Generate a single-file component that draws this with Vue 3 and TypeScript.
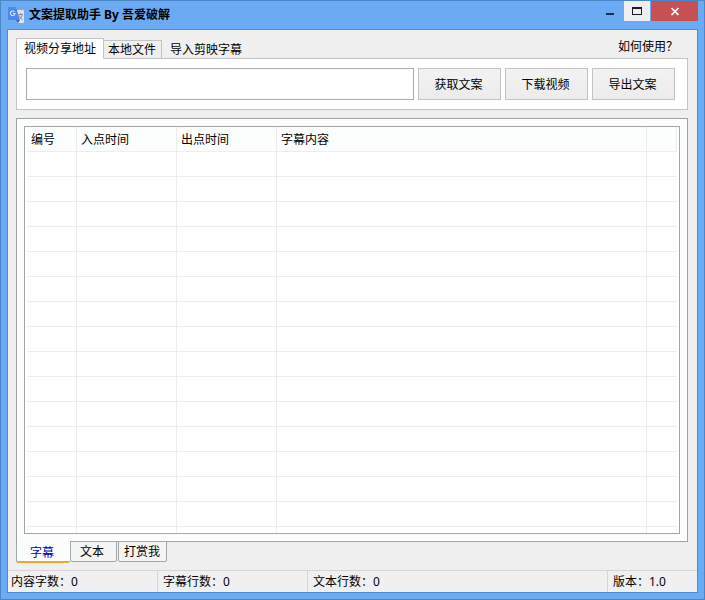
<script setup lang="ts">
import { ref } from 'vue'

interface StatusItem {
  label: string
  value: string
}

const sourceTabs: string[] = ['视频分享地址', '本地文件', '导入剪映字幕']
const viewTabs: string[] = ['字幕', '文本', '打赏我']
const actions: string[] = ['获取文案', '下载视频', '导出文案']
const columns: string[] = ['编号', '入点时间', '出点时间', '字幕内容', '']
const statusItems: StatusItem[] = [
  { label: '内容字数：', value: '0' },
  { label: '字幕行数：', value: '0' },
  { label: '文本行数：', value: '0' },
  { label: '版本：', value: '1.0' },
]
const emptyRows = 16

const activeSource = ref(0)
const activeView = ref(0)
const shareUrl = ref('')
</script>

<template>
  <div class="window">
    <header class="titlebar">
      <svg class="app-icon" viewBox="0 0 16 16" aria-hidden="true">
        <path d="M6 3h9a1 1 0 0 1 1 1v11a1 1 0 0 1-1 1h-5z" fill="#dfe3e6" />
        <path d="M1 0h7l4 13H1a1 1 0 0 1-1-1V1a1 1 0 0 1 1-1z" fill="#4f88ec" />
        <path d="M8 13h4l-2 3z" fill="#3464c0" />
        <path d="M6.500 4.800A2.300 2.300 0 1 0 7 6.500H4.900" fill="none" stroke="#d5e6ff" stroke-width="1.100" />
        <path d="M10.500 7.500h4.500M12.700 6v1.500M14.200 7.500c-.4 2.300-1.600 4-3 5M11.300 8.500c.6 1.700 1.800 3.200 3.500 4" fill="none" stroke="#84909a" stroke-width="1" />
      </svg>
      <h1 class="title">文案提取助手 By 吾爱破解</h1>
      <div class="controls">
        <button class="control minimize" type="button" aria-label="最小化">
          <svg viewBox="0 0 10 10" aria-hidden="true"><path d="M0 7h8v2H0z" fill="#17304c" /></svg>
        </button>
        <button class="control maximize" type="button" aria-label="最大化">
          <svg viewBox="0 0 10 10" aria-hidden="true"><path d="M0 1h10v8H0zM1 3v5h8V3z" fill="#1c1c1c" fill-rule="evenodd" /></svg>
        </button>
        <button class="control close" type="button" aria-label="关闭">
          <svg viewBox="0 0 10 10" aria-hidden="true"><path d="M1.500 2l7 7M8.500 2l-7 7" stroke="#fff" stroke-width="1.700" /></svg>
        </button>
      </div>
    </header>

    <main class="client">
      <section class="source">
        <div class="source-head">
          <div class="source-tabs" role="tablist">
            <button
              v-for="(tab, i) in sourceTabs"
              :key="tab"
              class="source-tab"
              :class="{ active: activeSource === i, plain: i === 2 }"
              type="button"
              role="tab"
              :aria-selected="activeSource === i"
              @click="activeSource = i"
            >{{ tab }}</button>
          </div>
          <a class="help" href="#">如何使用？</a>
        </div>
        <form class="source-panel" @submit.prevent>
          <input v-model="shareUrl" class="url" type="text" aria-label="视频分享地址" />
          <button v-for="action in actions" :key="action" class="action" type="button">{{ action }}</button>
        </form>
      </section>

      <section class="result">
        <div class="result-panel">
          <div class="grid-box">
            <table class="grid">
              <colgroup>
                <col class="col-no" />
                <col class="col-time" />
                <col class="col-time" />
                <col class="col-text" />
                <col />
              </colgroup>
              <thead>
                <tr>
                  <th v-for="(column, i) in columns" :key="i" scope="col">{{ column }}</th>
                </tr>
              </thead>
              <tbody>
                <tr v-for="row in emptyRows" :key="row">
                  <td v-for="(column, i) in columns" :key="i"></td>
                </tr>
              </tbody>
            </table>
          </div>
        </div>
        <div class="view-tabs" role="tablist">
          <button
            v-for="(tab, i) in viewTabs"
            :key="tab"
            class="view-tab"
            :class="{ active: activeView === i }"
            type="button"
            role="tab"
            :aria-selected="activeView === i"
            @click="activeView = i"
          >{{ tab }}</button>
        </div>
      </section>

      <footer class="status">
        <span v-for="item in statusItems" :key="item.label" class="status-item">{{ item.label }}{{ item.value }}</span>
      </footer>
    </main>
  </div>
</template>

<style>
body {
  margin: 0;
}
</style>

<style scoped>
.window {
  box-sizing: border-box;
  display: flex;
  flex-direction: column;
  height: 100vh;
  padding: 0 6px 6px;
  border: 1px solid #4a86c8;
  background: #6aabf4;
  color: #000;
  font: 12px/16px "Noto Sans", "Noto Sans CJK SC", sans-serif;
}

button,
input {
  box-sizing: border-box;
  margin: 0;
  border-radius: 0;
  color: inherit;
  font: inherit;
}

.titlebar {
  display: flex;
  height: 28px;
}

.app-icon {
  width: 16px;
  height: 16px;
  margin: 6px 5px 0 1px;
}

.title {
  flex: 1;
  margin: 5px 0 0;
  font-size: 12px;
  font-weight: 700;
  line-height: 18px;
}

.controls {
  display: flex;
  height: 20px;
}

.control {
  display: flex;
  align-items: center;
  justify-content: center;
  width: 27px;
  padding: 0;
  border: 0;
  background: transparent;
}

.control svg {
  width: 10px;
  height: 10px;
}

.maximize {
  width: 26px;
  margin-right: 1px;
  background: #eeeff1;
}

.close {
  width: 47px;
  background: #c75050;
}

.client {
  display: flex;
  flex: 1;
  flex-direction: column;
  min-height: 0;
  border: 1px solid #4f8cc9;
  background: #efefef;
}

.source {
  padding: 8px 9px 8px 8px;
}

.source-head {
  display: flex;
  justify-content: space-between;
}

.source-tabs {
  display: flex;
  align-items: flex-end;
  position: relative;
  margin-bottom: -1px;
}

.source-tab {
  height: 19px;
  padding: 0 5px 0 4px;
  border: 1px solid #c3c3c3;
  border-left: 0;
  background: #f0f0f0;
  line-height: 16px;
}

.source-tab.active {
  height: 21px;
  padding: 1px 7px 0;
  border-left: 1px solid #c3c3c3;
  border-bottom-color: #fff;
  background: #fff;
}

.source-tab.plain {
  padding: 0 8px;
  border-color: transparent transparent #c3c3c3;
}

.help {
  margin-right: 10px;
  color: inherit;
  line-height: 18px;
  text-decoration: none;
}

.source-panel {
  display: flex;
  gap: 4px;
  padding: 9px 12px 9px 9px;
  border: 1px solid #c3c3c3;
  background: #fff;
}

.url {
  flex: 1;
  min-width: 0;
  height: 32px;
  padding: 0 6px;
  border: 1px solid #ababab;
  background: #fff;
}

.action {
  width: 83px;
  height: 32px;
  padding: 2px 2px 0 0;
  border: 1px solid #c3c3c3;
  background: linear-gradient(#f2f2f2, #ececec);
}

.result {
  display: flex;
  flex: 1;
  flex-direction: column;
  min-height: 0;
  padding: 0 9px 7px 8px;
}

.result-panel {
  display: flex;
  flex: 1;
  min-height: 0;
  padding: 7px;
  border: 1px solid #a0a3a3;
  background: #fbfdfc;
}

.grid-box {
  flex: 1;
  min-width: 0;
  overflow: hidden;
  padding: 0 2px;
  border: 1px solid #a5a5a5;
  background: #fff;
}

.grid {
  width: 100%;
  border-spacing: 0;
  table-layout: fixed;
}

.col-no {
  width: 50px;
}

.col-time {
  width: 100px;
}

.col-text {
  width: 370px;
}

.grid th,
.grid td {
  box-sizing: border-box;
  height: 25px;
  padding: 0 4px;
  border-right: 1px solid #ededed;
  border-bottom: 1px solid #ededed;
}

.grid th {
  padding-top: 2px;
  background: #fcfdfd;
  font-weight: 400;
  line-height: 16px;
  text-align: left;
}

.grid td:last-child {
  border-right: 0;
}

.view-tabs {
  display: flex;
  align-items: flex-start;
  position: relative;
  margin-top: -1px;
}

.view-tab {
  height: 21px;
  margin-right: 1px;
  padding: 1px 6px 0 5px;
  border: 1px solid #a0a8a8;
  border-radius: 0 0 2px 2px;
  background: #f3f4f3;
}

.view-tab:nth-child(2) {
  padding: 1px 12px 0 9px;
}

.view-tab.active {
  height: 22px;
  margin-right: 0;
  padding: 3px 16px 0 13px;
  border-width: 0 0 2px 1px;
  border-bottom-color: #eca62c;
  background: #fbfdfc;
  color: #0000b0;
}

.status {
  display: flex;
  height: 21px;
  border-top: 1px solid #d5d5d5;
  background: #f0f0f0;
  line-height: 21px;
}

.status-item {
  box-sizing: border-box;
  width: 150px;
  padding-left: 5px;
  border-left: 1px solid #d5d5d5;
  white-space: nowrap;
}

.status-item:first-child {
  width: 149px;
  padding-left: 3px;
  border-left: 0;
}

.status-item:nth-child(3) {
  flex: 1;
}

.status-item:last-child {
  width: 90px;
}
</style>
